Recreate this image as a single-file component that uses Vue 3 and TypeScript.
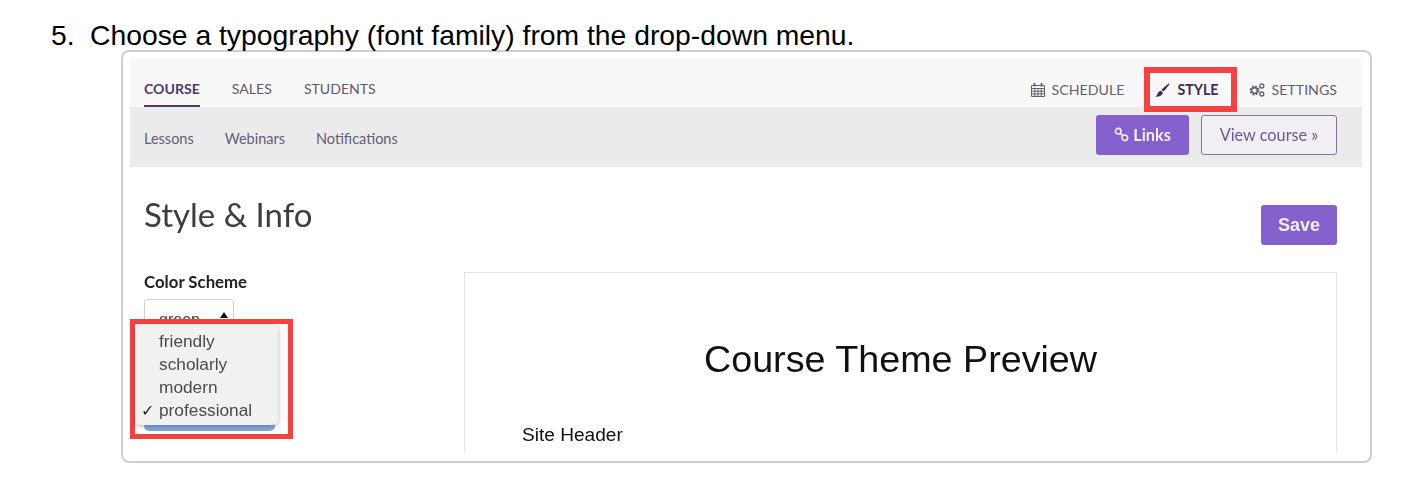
<template>
  <main class="page">
    <p class="step"><span class="step__num">5.</span>Choose a typography (font family) from the drop-down menu.</p>

    <section class="shot">
      <div class="shot__inner">
        <nav class="topnav">
          <div class="topnav__left">
            <a v-for="tab in mainTabs" :key="tab" class="tab" :class="{ 'tab--active': tab === 'COURSE' }">{{ tab }}</a>
          </div>
          <div class="topnav__right">
            <a class="tool">
              <svg class="tool__icon" viewBox="0 0 14 14" width="14" height="14">
                <path fill="none" stroke="currentColor" stroke-width="1" d="M.5 2.500h13v11H.5zM.5 5.500h13M3.800 5.500v8M7 5.500v8M10.200 5.500v8M.5 8.200h13M.5 10.900h13" />
                <path fill="none" stroke="currentColor" stroke-width="1.800" d="M3.500 0v3.500M10.500 0v3.500" />
              </svg>
              SCHEDULE
            </a>
            <a class="tool tool--active">
              <svg class="tool__icon" viewBox="0 0 15 14" width="15" height="14">
                <path fill="currentColor" d="M14.800.2c.4.4-3.400 5.300-5.400 7.300-.5.5-1.100.9-1.600.6l-.9-.9c-.3-.5.2-1.100.7-1.600C9.600 3.600 14.400-.2 14.800.2zM5.500 8c1.400-.2 2.500.9 2.200 2.300-.4 2-2.900 3.700-7.500 3.500 1.500-.9 2-1.900 2.400-3.200C3 9.300 4 8.200 5.500 8z" />
              </svg>
              STYLE
            </a>
            <a class="tool">
              <svg class="tool__icon" viewBox="0 0 16 14" width="16" height="14">
                <circle cx="5.500" cy="7.500" r="4" fill="none" stroke="currentColor" stroke-width="2" stroke-dasharray="1.800 1.340" />
                <circle cx="5.500" cy="7.500" r="2.900" fill="none" stroke="currentColor" stroke-width="1.600" />
                <circle cx="12.800" cy="3" r="2" fill="none" stroke="currentColor" stroke-width="1.300" />
                <circle cx="12.800" cy="11" r="2" fill="none" stroke="currentColor" stroke-width="1.300" />
              </svg>
              SETTINGS
            </a>
          </div>
        </nav>

        <div class="subnav">
          <div class="subnav__left">
            <a v-for="item in subTabs" :key="item" class="subtab">{{ item }}</a>
          </div>
          <div class="subnav__right">
            <button class="btn btn--solid">
              <svg viewBox="0 0 16 16" width="15" height="15">
                <circle cx="4.500" cy="4.500" r="3" fill="none" stroke="currentColor" stroke-width="1.700" />
                <circle cx="11.500" cy="11.500" r="3" fill="none" stroke="currentColor" stroke-width="1.700" />
                <path stroke="currentColor" stroke-width="1.700" d="M6.500 6.500l3 3" />
              </svg>
              Links
            </button>
            <button class="btn btn--outline">View course »</button>
          </div>
        </div>

        <div class="content">
          <header class="content__head">
            <h1>Style &amp; Info</h1>
            <button class="btn btn--save">Save</button>
          </header>

          <div class="content__body">
            <aside class="side">
              <label class="side__label">Color Scheme</label>
              <div class="select">
                <span>green</span>
                <i class="select__arrow"></i>
              </div>
              <div class="callout">
                <div class="callout__blue"></div>
                <ul class="menu">
                  <li v-for="font in fonts" :key="font" class="menu__item">
                    <span class="menu__check">{{ font === 'professional' ? '✓' : '' }}</span>{{ font }}
                  </li>
                </ul>
              </div>
            </aside>

            <div class="preview">
              <h2>Course Theme Preview</h2>
              <p>Site Header</p>
            </div>
          </div>
        </div>
      </div>
    </section>
  </main>
</template>

<script setup lang="ts">
const mainTabs = ["COURSE", "SALES", "STUDENTS"];
const subTabs = ["Lessons", "Webinars", "Notifications"];
const fonts = ["friendly", "scholarly", "modern", "professional"];
</script>

<style>
html,
body {
  background: #fff;
}
</style>

<style scoped>
.page {
  width: 1412px;
  height: 504px;
  overflow: hidden;
  position: relative;
  font-family: "Lato", "Liberation Sans", sans-serif;
}

.step {
  margin: 0;
  height: 50px;
  padding: 20px 0 0 51px;
  box-sizing: border-box;
  font: 28.3px/30px "Liberation Sans", Arial, sans-serif;
  color: #000;
  white-space: nowrap;
}

.step__num {
  display: inline-block;
  width: 39px;
}

.shot {
  margin-left: 121px;
  width: 1251px;
  height: 413px;
  box-sizing: border-box;
  border: 2px solid #cfcfcf;
  border-radius: 8px;
  padding: 6px 8px 8px 7px;
}

.shot__inner {
  height: 100%;
  overflow: hidden;
  filter: blur(0.3px);
}

.topnav {
  height: 49px;
  background: #f8f8f8;
  display: flex;
  justify-content: space-between;
  padding: 0 25px 0 14px;
}

.topnav__left {
  display: flex;
  gap: 32px;
}

.tab {
  height: 49px;
  box-sizing: border-box;
  padding-top: 22px;
  font-size: 14.1px;
  line-height: 18px;
  color: #5f5a6b;
}

.tab--active {
  color: #4d3a6c;
  font-weight: 700;
  border-bottom: 2px solid #54366f;
}

.topnav__right {
  display: flex;
  align-items: center;
  gap: 31px;
  padding-top: 14px;
}

.tool {
  display: flex;
  align-items: center;
  gap: 6px;
  font-size: 14.2px;
  color: #66616f;
}

.tool:first-child {
  gap: 7px;
}

.tool--active {
  gap: 7px;
  color: #3e2a5e;
  font-weight: 700;
  position: relative;
}

/* red marker drawn over the STYLE tab */
.tool--active::after {
  content: "";
  position: absolute;
  left: -11px;
  right: -19px;
  top: -14px;
  bottom: -14px;
  border: 6px solid #f44242;
}

.subnav {
  height: 60px;
  background: #ebebeb;
  display: flex;
  justify-content: space-between;
  padding: 0 25px 0 14px;
}

.subnav__left {
  display: flex;
  gap: 31px;
  padding-top: 23px;
}

.subtab {
  font-size: 14.5px;
  line-height: 17px;
  color: #665c78;
}

.subnav__right {
  display: flex;
  gap: 12px;
  padding-top: 8px;
}

.btn {
  height: 40px;
  box-sizing: border-box;
  border-radius: 3px;
  font-family: inherit;
  font-size: 16.3px;
  padding: 0 0 2px;
  display: flex;
  align-items: center;
  justify-content: center;
  gap: 4px;
}

.btn--solid {
  width: 93px;
  background: #8460cc;
  border: 0;
  color: #f3eefb;
  font-weight: 700;
}

.btn--outline {
  width: 136px;
  background: #f1eff3;
  border: 1.5px solid #8a70a8;
  color: #6b5a8c;
}

.btn--save {
  width: 76px;
  padding: 0;
  background: #8460cc;
  border: 0;
  color: #f3eefb;
  font: 700 18px "Liberation Sans", Arial, sans-serif;
}

.content {
  padding: 0 25px 0 14px;
}

.content__head {
  display: flex;
  justify-content: space-between;
  height: 105px;
  padding-top: 28px;
  box-sizing: border-box;
}

.content__head .btn--save {
  margin-top: 10px;
}

.content__head h1 {
  margin: 0;
  font-size: 33px;
  line-height: 38px;
  font-weight: 400;
  color: #3d3d3d;
}

.content__body {
  display: flex;
}

.side {
  width: 320px;
  flex: none;
  position: relative;
}

.side__label {
  display: block;
  font-size: 16.8px;
  font-weight: 700;
  line-height: 20px;
  color: #222;
  margin-bottom: 7px;
}

.select {
  width: 90px;
  height: 40px;
  box-sizing: border-box;
  border: 1px solid #cfcfcf;
  border-radius: 3px;
  padding: 11px 0 0 14px;
  font: 16px "Liberation Sans", Arial, sans-serif;
  color: #444;
  position: relative;
}

.select__arrow {
  position: absolute;
  right: 5px;
  top: 12px;
  border: 4px solid transparent;
  border-top: 0;
  border-bottom: 6px solid #111;
}

.callout {
  position: absolute;
  left: -14px;
  top: 47px;
  width: 163px;
  height: 120px;
  box-sizing: border-box;
  border: 5px solid #f44242;
  background: #fbfbfb;
}

.callout__blue {
  position: absolute;
  left: 9px;
  top: 85px;
  width: 131px;
  height: 22px;
  background: #7fa6d6;
  border-radius: 0 0 5px 5px;
}

.menu {
  position: absolute;
  left: 0;
  top: 1px;
  width: 143px;
  height: 100px;
  box-sizing: border-box;
  margin: 0;
  padding: 5px 0 0;
  list-style: none;
  background: #f1f1f1;
  border-radius: 5px;
  box-shadow: 0 1px 4px rgba(0, 0, 0, 0.28);
}

.menu__item {
  display: flex;
  height: 23px;
  font: 17.3px/23px "Liberation Sans", Arial, sans-serif;
  color: #4a4a4a;
}

.menu__check {
  width: 24px;
  flex: none;
  text-align: center;
  font-size: 16px;
  color: #222;
}

.preview {
  flex: 1;
  height: 200px;
  box-sizing: border-box;
  border: 1px solid #e3e3e3;
  border-bottom: 0;
  padding: 64px 0 0 57px;
  font-family: "Liberation Sans", Arial, sans-serif;
  color: #111;
}

.preview h2 {
  margin: 0 0 0 -57px;
  text-align: center;
  font-size: 37.7px;
  line-height: 44px;
  font-weight: 400;
}

.preview p {
  margin: 43px 0 0;
  font-size: 19.1px;
  line-height: 22px;
}
</style>
